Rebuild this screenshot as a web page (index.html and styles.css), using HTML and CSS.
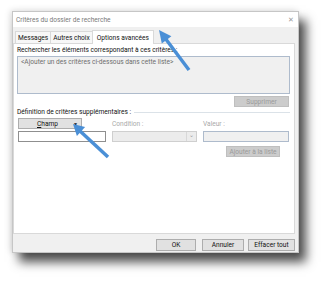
FILE: index.html
```html
<html lang="fr">
<head>
    <meta charset="UTF-8">
    <title>Critères du dossier de recherche</title>
    <link rel="stylesheet" href="styles.css">
</head>
<body>
<div class="dialog">
    <div class="titlebar">
        <span class="title">Critères du dossier de recherche</span>
        <span class="close">&#x2715;</span>
    </div>

    <div class="tabs">
        <div class="tab">Messages</div>
        <div class="tab">Autres choix</div>
        <div class="tab active">Options avancées</div>
    </div>

    <div class="panel">
        <div class="label">Rechercher les éléments correspondant à ces critères :</div>
        <div class="listbox">&lt;Ajouter un des critères ci-dessous dans cette liste&gt;</div>
        <div class="row-right">
            <div class="btn disabled del">Supprimer</div>
        </div>

        <div class="group">
            <span>Définition de critères supplémentaires :</span>
            <span class="rule"></span>
        </div>

        <div class="fields">
            <div class="btn champ"><span><u>C</u>hamp</span><span class="caret">&#9660;</span></div>
            <div class="dim">Condition :</div>
            <div class="dim">Valeur :</div>
            <div class="input"></div>
            <div class="select"><span class="drop">&#8964;</span></div>
            <div class="input off"></div>
        </div>

        <div class="row-right add-row">
            <div class="btn disabled add">Ajouter à la liste</div>
        </div>
    </div>

    <div class="footer">
        <div class="btn ok">OK</div>
        <div class="btn cancel">Annuler</div>
        <div class="btn clear">Effacer tout</div>
    </div>
</div>

<!-- fleches d'annotation -->
<svg class="arrows" width="332" height="283" viewBox="0 0 332 283">
    <line x1="189" y1="70" x2="165" y2="38" stroke="#4a8fd6" stroke-width="3.5"/>
    <polygon points="159,30 171.4,36.2 161.8,43.4" fill="#4a8fd6"/>
    <line x1="108" y1="157" x2="80" y2="131" stroke="#4a8fd6" stroke-width="3.5"/>
    <polygon points="73,124 85.1,127.1 76.9,135.9" fill="#4a8fd6"/>
</svg>
</body>
</html>
```

FILE: styles.css
```css
* {
    margin: 0;
    padding: 0;
    box-sizing: border-box;
}

body {
    width: 332px;
    height: 283px;
    background: #fff;
    padding: 11px 0 0 12px;
    font-family: Roboto, "Noto Sans", sans-serif;
    font-size: 6.6px;
    color: #111;
    position: relative;
    overflow: hidden;
}

.dialog {
    width: 287px;
    height: 242px;
    background: #f0f0f0;
    border: 1px solid #c6c6c6;
    box-shadow: 7px 9px 10px rgba(0, 0, 0, .7), -2px -1px 6px rgba(0, 0, 0, .12);
    display: flex;
    flex-direction: column;
}

.titlebar {
    height: 15px;
    background: #fff;
    display: flex;
    align-items: center;
    justify-content: space-between;
    padding: 0 4px 0 3px;
    color: #7a7a7a;
}

.close {
    font-size: 7px;
    color: #9a9a9a;
}

.tabs {
    display: flex;
    align-items: flex-end;
    height: 16px;
    padding-left: 2px;
}

.tab {
    height: 12px;
    padding: 0 2px;
    border: 1px solid #d9d9d9;
    border-bottom: none;
    background: #f7f7f7;
    display: flex;
    align-items: center;
    margin-right: -1px;
}

.tab.active {
    height: 14px;
    background: #fff;
    padding: 0 4px;
    position: relative;
    z-index: 1;
    margin-bottom: -1px;
}

.panel {
    width: 282px;
    height: 191px;
    background: #fff;
    border: 1px solid #d9d9d9;
    padding: 2px 3px 0 3px;
}

.label {
    height: 8px;
    line-height: 8px;
}

.listbox {
    width: 273px;
    height: 38px;
    margin-top: 2px;
    border: 1px solid #aebbcc;
    background: #f0f0f0;
    color: #6e6e6e;
    padding: 1px 3px;
}

.row-right {
    display: flex;
    justify-content: flex-end;
    width: 273px;
    margin-top: 2px;
}

.btn {
    height: 11px;
    display: flex;
    align-items: center;
    justify-content: center;
    background: #e1e1e1;
    border: 1px solid #adadad;
}

.btn.disabled {
    background: #cccccc;
    border-color: #bfbfbf;
    color: #9a9a9a;
}

.del {
    width: 55px;
    margin-right: 1px;
}

.group {
    display: flex;
    align-items: center;
    width: 273px;
    height: 8px;
    margin-top: 1px;
}

.rule {
    flex: 1;
    height: 1px;
    background: #dbe2e8;
    margin-left: 3px;
}

.fields {
    display: grid;
    grid-template-columns: 88px 85px 86px;
    grid-template-rows: 11px 11px;
    column-gap: 6px;
    row-gap: 2px;
    margin: 2px 0 0 1px;
}

.fields .dim {
    color: #a9a9a9;
    display: flex;
    align-items: center;
}

.champ {
    width: 64px;
    justify-content: space-between;
    padding: 0 3px 0 18px;
    color: #111;
}

.caret {
    font-size: 5px;
}

.input {
    border: 1px solid #8f8f8f;
    background: #fff;
}

.input.off {
    border-color: #aebbcc;
    background: #f0f0f0;
}

.select {
    border: 1px solid #cfcfcf;
    background: #ececec;
    display: flex;
    justify-content: flex-end;
}

.drop {
    width: 10px;
    border-left: 1px solid #d8d8d8;
    color: #9a9a9a;
    font-size: 6px;
    line-height: 6px;
    text-align: center;
}

.add-row {
    margin-top: 4px;
}

.add {
    width: 54px;
    margin-right: 10px;
}

.footer {
    flex: 1;
    display: flex;
    justify-content: flex-end;
    align-items: flex-start;
    padding: 5px 3px 0 0;
    gap: 6px;
}

.footer .btn {
    height: 12px;
}

.ok {
    width: 40px;
}

.cancel {
    width: 42px;
}

.clear {
    width: 47px;
    margin-left: -2px;
}

.arrows {
    position: absolute;
    left: 0;
    top: 0;
}
```
